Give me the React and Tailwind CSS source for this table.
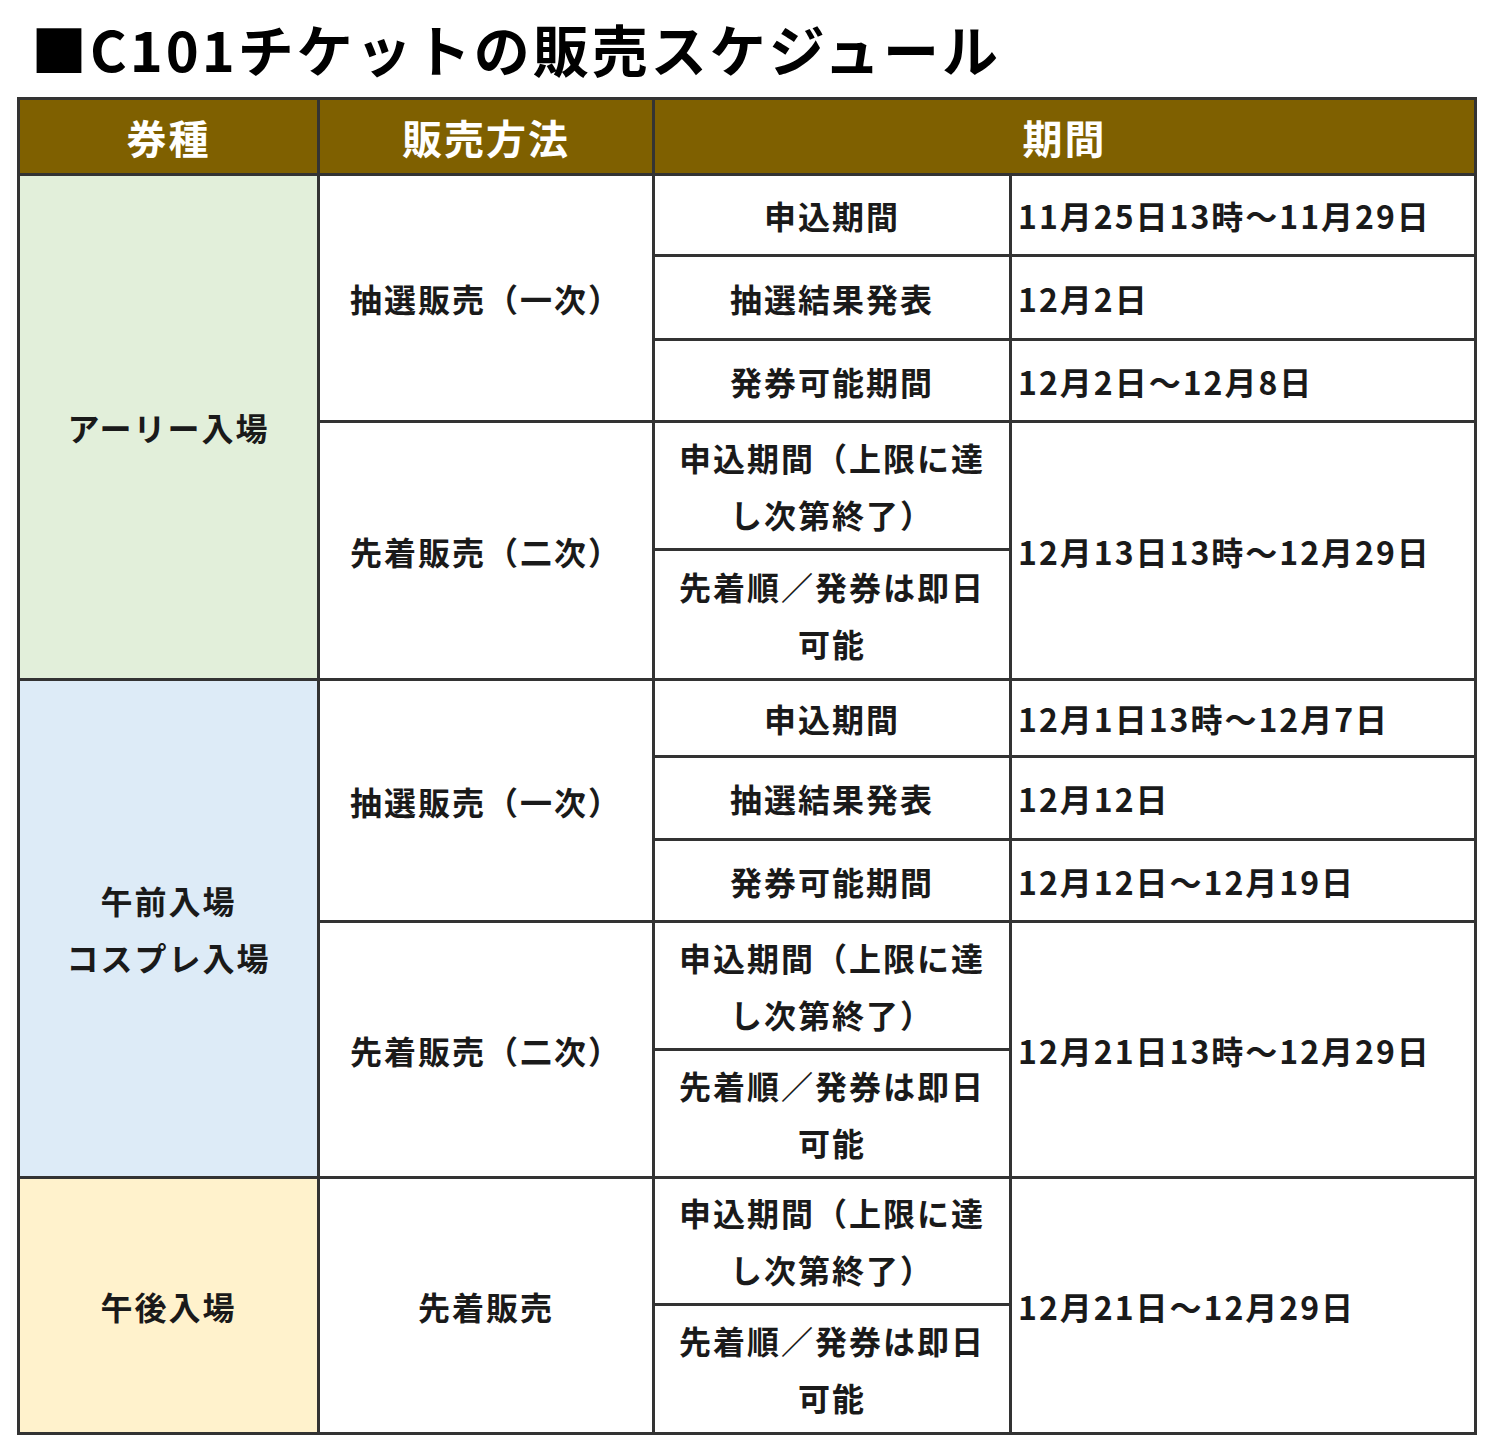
const JP = { fontFamily: '"Noto Sans CJK JP", "Noto Sans", sans-serif' };

function Cell({ className = '', children }) {
  return (
    <div className={'flex items-center justify-center text-center ' + className}>
      <div>{children}</div>
    </div>
  );
}

function Period({ className = '', children }) {
  return (
    <div className={'flex items-center justify-start pl-[6px] bg-white ' + className}>
      <div>{children}</div>
    </div>
  );
}

// 申込期間（上限に達し次第終了） / 先着順… の2段セル
function FirstComeRows({ period }) {
  return (
    <>
      <Cell className="bg-white leading-[57px]">
        申込期間（上限に達
        <br />
        し次第終了）
      </Cell>
      <Period className="row-span-2">{period}</Period>
      <Cell className="bg-white leading-[57px]">
        先着順／発券は即日
        <br />
        可能
      </Cell>
    </>
  );
}

export default function App() {
  return (
    <div className="w-[1500px] h-[1450px] bg-white px-[17px]" style={JP}>
      <div className="h-[97px] flex items-center pl-[14px] pb-[2px]">
        <h1 className="text-[56px] font-bold text-black tracking-[3px] leading-none">■C101チケットの販売スケジュール</h1>
      </div>

      <div className="grid w-fit bg-[#333333] p-[3px] gap-[3px] text-[#1a1a1a] font-bold text-[32px] tracking-[2px] grid-cols-[297px_332px_354px_462px] grid-rows-[73px_78px_81px_79px_125px_127px_74px_80px_79px_125px_125px_124px_126px]">
        <Cell className="bg-[#7f6000] text-white text-[40px]">券種</Cell>
        <Cell className="bg-[#7f6000] text-white text-[40px]">販売方法</Cell>
        <Cell className="bg-[#7f6000] text-white text-[40px] col-span-2">期間</Cell>

        {/* アーリー入場 */}
        <Cell className="bg-[#e2efda] row-span-5">アーリー入場</Cell>
        <Cell className="bg-white row-span-3">抽選販売（一次）</Cell>
        <Cell className="bg-white">申込期間</Cell>
        <Period>11月25日13時～11月29日</Period>
        <Cell className="bg-white">抽選結果発表</Cell>
        <Period>12月2日</Period>
        <Cell className="bg-white">発券可能期間</Cell>
        <Period>12月2日～12月8日</Period>
        <Cell className="bg-white row-span-2">先着販売（二次）</Cell>
        <FirstComeRows period="12月13日13時～12月29日" />

        {/* 午前入場 / コスプレ入場 */}
        <Cell className="bg-[#ddebf7] row-span-5 leading-[57px]">
          午前入場
          <br />
          コスプレ入場
        </Cell>
        <Cell className="bg-white row-span-3">抽選販売（一次）</Cell>
        <Cell className="bg-white">申込期間</Cell>
        <Period>12月1日13時～12月7日</Period>
        <Cell className="bg-white">抽選結果発表</Cell>
        <Period>12月12日</Period>
        <Cell className="bg-white">発券可能期間</Cell>
        <Period>12月12日～12月19日</Period>
        <Cell className="bg-white row-span-2">先着販売（二次）</Cell>
        <FirstComeRows period="12月21日13時～12月29日" />

        {/* 午後入場 */}
        <Cell className="bg-[#fff2cc] row-span-2">午後入場</Cell>
        <Cell className="bg-white row-span-2">先着販売</Cell>
        <FirstComeRows period="12月21日～12月29日" />
      </div>
    </div>
  );
}
